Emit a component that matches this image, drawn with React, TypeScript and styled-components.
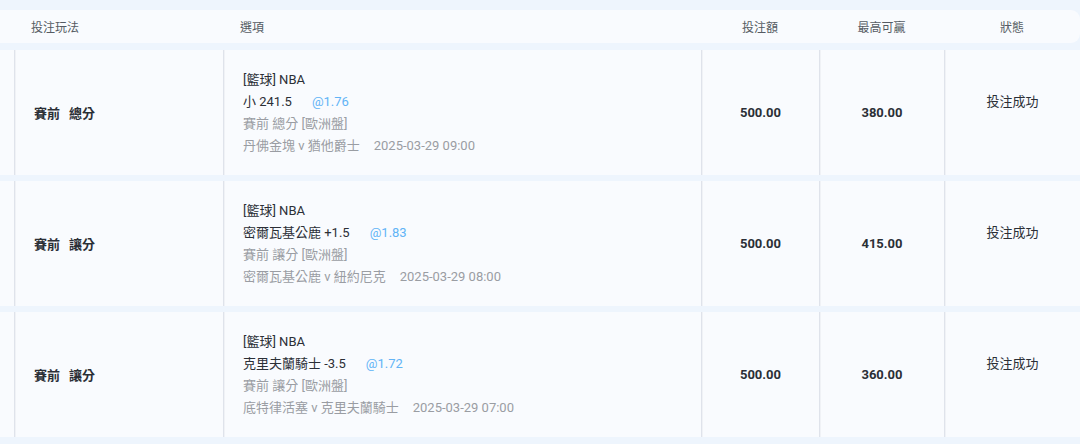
import React from "react";
import styled, { createGlobalStyle } from "styled-components";

const Global = createGlobalStyle`
  html, body { margin: 0; padding: 0; background: #eef5fd; }
  body { font-family: Roboto, "Noto Sans CJK TC", "Noto Sans CJK SC", sans-serif; }
`;

const COLS = "14px 209px 478px 118px 125px 136px";

const Page = styled.div`
  width: 1080px;
  height: 444px;
  overflow: hidden;
  padding-top: 10px;
  box-sizing: border-box;
  display: flex;
  flex-direction: column;
  gap: 7px;
`;

const HeaderBar = styled.div`
  display: grid;
  grid-template-columns: ${COLS};
  height: 33px;
  background: #f9fbfe;
  border-radius: 0 9px 9px 0;
  align-items: center;
  font-size: 12px;
  color: #555b63;
`;

const HeadCell = styled.div<{ $center?: boolean }>`
  text-align: ${(p) => (p.$center ? "center" : "left")};
  padding-left: ${(p) => (p.$center ? "0" : "17px")};
`;

const Body = styled.div`
  display: flex;
  flex-direction: column;
  gap: 6px;
`;

const Row = styled.div`
  display: grid;
  grid-template-columns: ${COLS};
  height: 125px;
  background: #f9fbfe;
`;

const Cell = styled.div<{ $center?: boolean; $line?: boolean }>`
  display: flex;
  flex-direction: column;
  justify-content: center;
  align-items: ${(p) => (p.$center ? "center" : "flex-start")};
  padding-left: ${(p) => (p.$center ? "0" : "19px")};
  border-left: ${(p) => (p.$line ? "1px solid #dfe3eb" : "none")};
  box-shadow: ${(p) => (p.$line ? "inset 1px 0 0 #f0f2f6" : "none")};
  font-size: 13px;
  color: #333;
`;

const PlayType = styled.div`
  font-weight: 700;
  color: #2b2f36;
  display: flex;
  gap: 9px;
`;

const Line = styled.div<{ $muted?: boolean }>`
  line-height: 22px;
  height: 22px;
  white-space: nowrap;
  color: ${(p) => (p.$muted ? "#9a9da3" : "#2b2f36")};
`;

const Odds = styled.span`
  color: #62b4f6;
  margin-left: 20px;
`;

const Time = styled.span`
  margin-left: 14px;
`;

const Amount = styled.div`
  font-weight: 700;
  color: #2b2f36;
`;

const Status = styled.div`
  line-height: 22px;
  padding-bottom: 22px;
  color: #2b2f36;
`;

type Bet = {
  a: string;
  b: string;
  pick: string;
  odds: string;
  match: string;
  time: string;
  stake: string;
  win: string;
};

const bets: Bet[] = [
  { a: "賽前", b: "總分", pick: "小 241.5", odds: "@1.76", match: "丹佛金塊 v 猶他爵士", time: "2025-03-29 09:00", stake: "500.00", win: "380.00" },
  { a: "賽前", b: "讓分", pick: "密爾瓦基公鹿 +1.5", odds: "@1.83", match: "密爾瓦基公鹿 v 紐約尼克", time: "2025-03-29 08:00", stake: "500.00", win: "415.00" },
  { a: "賽前", b: "讓分", pick: "克里夫蘭騎士 -3.5", odds: "@1.72", match: "底特律活塞 v 克里夫蘭騎士", time: "2025-03-29 07:00", stake: "500.00", win: "360.00" },
];

export default function App() {
  return (
    <>
      <Global />
      <Page>
        <HeaderBar>
          <div />
          <HeadCell>投注玩法</HeadCell>
          <HeadCell>選項</HeadCell>
          <HeadCell $center>投注額</HeadCell>
          <HeadCell $center>最高可贏</HeadCell>
          <HeadCell $center>狀態</HeadCell>
        </HeaderBar>
        <Body>
          {bets.map((bet, i) => (
            <Row key={i}>
              <Cell />
              <Cell $line>
                <PlayType>
                  <span>{bet.a}</span>
                  <span>{bet.b}</span>
                </PlayType>
              </Cell>
              <Cell $line>
                <Line>[籃球] NBA</Line>
                <Line>
                  {bet.pick}
                  <Odds>{bet.odds}</Odds>
                </Line>
                <Line $muted>{`${bet.a} ${bet.b} [歐洲盤]`}</Line>
                <Line $muted>
                  {bet.match}
                  <Time>{bet.time}</Time>
                </Line>
              </Cell>
              <Cell $line $center>
                <Amount>{bet.stake}</Amount>
              </Cell>
              <Cell $line $center>
                <Amount>{bet.win}</Amount>
              </Cell>
              <Cell $line $center>
                <Status>投注成功</Status>
              </Cell>
            </Row>
          ))}
        </Body>
      </Page>
    </>
  );
}
